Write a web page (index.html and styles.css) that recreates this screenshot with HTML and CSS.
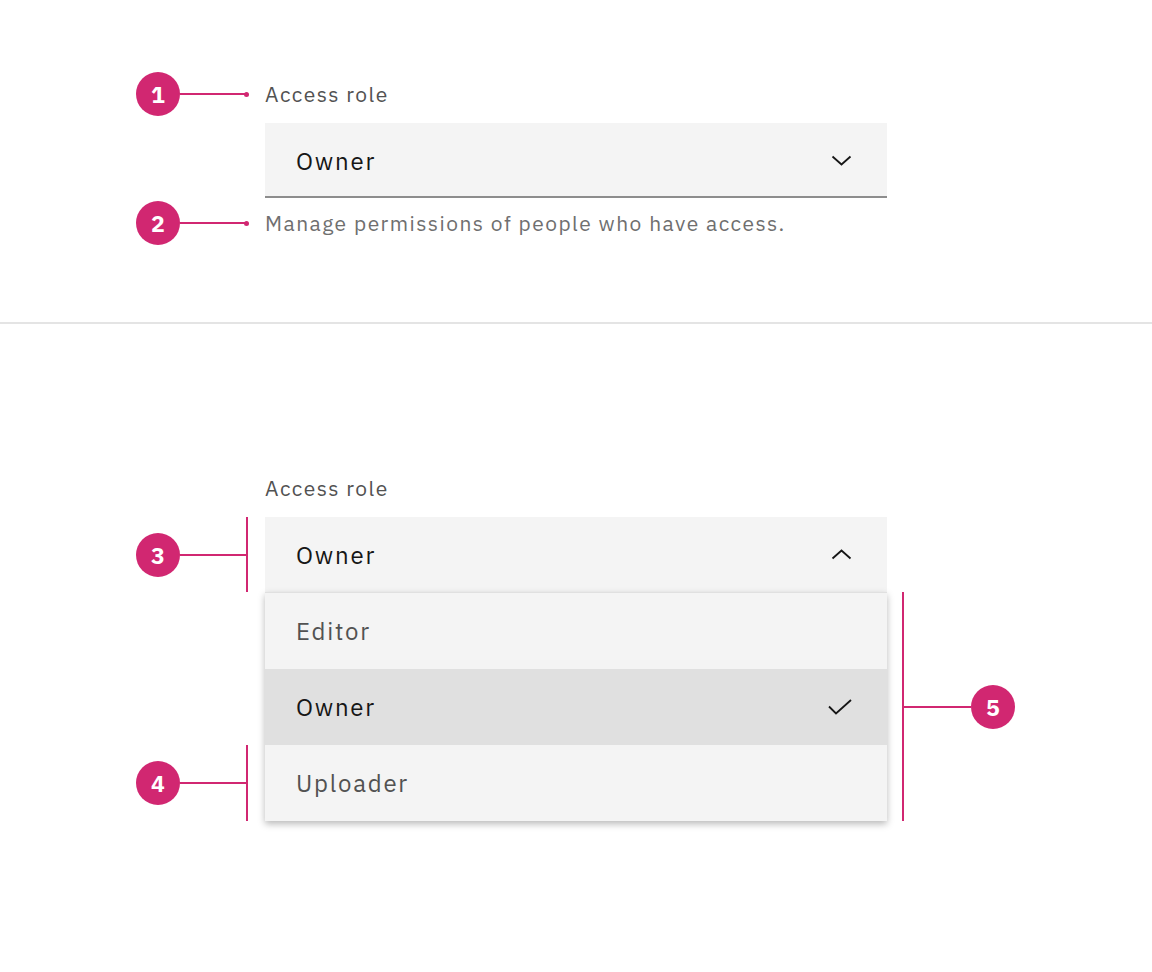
FILE: index.html
```html
<!DOCTYPE html>
<html lang="en">
<head>
<meta charset="utf-8">
<title>Dropdown anatomy</title>
<link rel="stylesheet" href="styles.css">
</head>
<body>
<div class="page">
  <section class="panel panel-top">
    <div class="group">
      <div class="label anchor">
        Access role
        <div class="callout callout-left">
          <span class="badge">1</span><span class="line"></span><span class="dot"></span>
        </div>
      </div>
      <div class="field field-closed">
        <span class="value">Owner</span>
        <svg class="chev" width="21" height="11" viewBox="0 0 21 11"><polyline points="1.5,1.5 10.5,9.5 19.5,1.5" fill="none" stroke="#161616" stroke-width="1.8"/></svg>
      </div>
      <div class="helper anchor">
        Manage permissions of people who have access.
        <div class="callout callout-left">
          <span class="badge">2</span><span class="line"></span><span class="dot"></span>
        </div>
      </div>
    </div>
  </section>
  <hr class="divider">
  <section class="panel panel-bottom">
    <div class="group">
      <div class="label">Access role</div>
      <div class="field field-open anchor">
        <span class="value">Owner</span>
        <svg class="chev" width="21" height="11" viewBox="0 0 21 11"><polyline points="1.5,9.5 10.5,1.5 19.5,9.5" fill="none" stroke="#161616" stroke-width="1.8"/></svg>
        <div class="bracket bracket-left"></div>
        <div class="callout callout-bracket-left">
          <span class="badge">3</span><span class="line"></span>
        </div>
      </div>
      <div class="menu anchor">
        <div class="item">Editor</div>
        <div class="item item-selected">
          <span>Owner</span>
          <svg class="check" width="24" height="16" viewBox="0 0 24 16"><polyline points="1,7.5 8,14.5 23,1" fill="none" stroke="#161616" stroke-width="1.8"/></svg>
        </div>
        <div class="item anchor">
          Uploader
          <div class="bracket bracket-left"></div>
          <div class="callout callout-bracket-left">
            <span class="badge">4</span><span class="line"></span>
          </div>
        </div>
        <div class="bracket bracket-right"></div>
        <div class="callout callout-bracket-right">
          <span class="line line-right"></span><span class="badge">5</span>
        </div>
      </div>
    </div>
  </section>
</div>
</body>
</html>
```

FILE: styles.css
```css
* { box-sizing: border-box; }

html, body {
  margin: 0;
  padding: 0;
  background: #ffffff;
}

body {
  font-family: "IBM Plex Sans", "Open Sans", "Noto Sans", sans-serif;
  color: #161616;
}

.page {
  width: 1152px;
  height: 972px;
  background: #ffffff;
}

.panel-top {
  height: 322px;
  padding-top: 80px;
}

.divider {
  margin: 0;
  border: 0;
  height: 2px;
  background: #e4e4e4;
}

.panel-bottom {
  padding-top: 150px;
}

.group {
  margin-left: 265px;
  width: 622px;
}

.anchor {
  position: relative;
}

.label {
  font-size: 21px;
  line-height: 28px;
  color: #525252;
  letter-spacing: 1.45px;
}

.helper {
  margin-top: 11px;
  font-size: 21px;
  line-height: 28px;
  color: #6f6f6f;
  letter-spacing: 1.45px;
}

.field {
  margin-top: 15px;
  height: 75px;
  background: #f4f4f4;
  display: flex;
  align-items: center;
  justify-content: space-between;
  padding-left: 31px;
  padding-right: 35px;
  font-size: 24px;
  letter-spacing: 1.8px;
  color: #161616;
}

.field-closed {
  border-bottom: 2px solid #8d8d8d;
  padding-top: 2px;
}

.chev {
  display: block;
}

.menu {
  background: #f4f4f4;
  border-top: 1px solid #e0e0e0;
  box-shadow: 0 3px 7px rgba(0, 0, 0, 0.28);
}

.item {
  height: 76px;
  display: flex;
  align-items: center;
  justify-content: space-between;
  padding-left: 31px;
  padding-right: 35px;
  font-size: 24px;
  letter-spacing: 1.75px;
  color: #525252;
}

.item-selected {
  background: #e0e0e0;
  color: #161616;
}

.check {
  display: block;
}

/* Annotation callouts */
.callout {
  position: absolute;
  top: 50%;
  transform: translateY(-50%);
  display: flex;
  align-items: center;
  letter-spacing: 0;
}

.callout-left {
  right: calc(100% + 16px);
}

.callout-bracket-left {
  right: calc(100% + 18px);
}

.callout-bracket-right {
  left: calc(100% + 16px);
}

.badge {
  width: 44px;
  height: 44px;
  border-radius: 50%;
  background: #d12771;
  color: #ffffff;
  font-family: "IBM Plex Sans", "Open Sans", sans-serif;
  font-weight: 700;
  font-size: 23px;
  line-height: 44px;
  text-align: center;
  flex: none;
}

.line {
  display: block;
  width: 66px;
  height: 2px;
  background: #d12771;
}

.callout-bracket-left .line {
  width: 67px;
}

.line-right {
  width: 68px;
}

.dot {
  display: block;
  width: 5px;
  height: 5px;
  border-radius: 50%;
  background: #d12771;
  margin-left: -2px;
}

.bracket {
  position: absolute;
  top: 0;
  bottom: 0;
  width: 2px;
  background: #d12771;
}

.bracket-left {
  left: -19px;
}

.bracket-right {
  left: calc(100% + 15px);
  top: -1px;
}
```
